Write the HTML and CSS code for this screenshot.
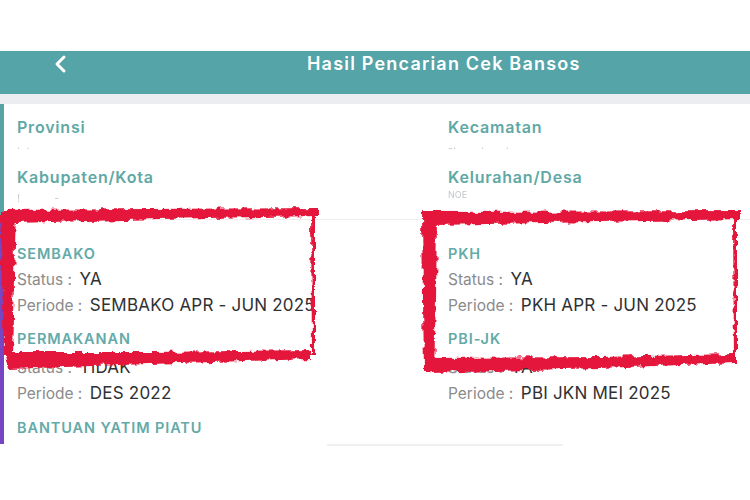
FILE: index.html
```html
<!DOCTYPE html>
<html>
<head>
<meta charset="utf-8">
<link rel="stylesheet" href="styles.css">
</head>
<body>
<div class="page">
  <div class="topspace"></div>
  <header class="appbar">
    <svg class="back" width="16" height="20" viewBox="0 0 16 20"><polyline points="11,3 4,10 11,17" fill="none" stroke="#fff" stroke-width="3" stroke-linecap="round" stroke-linejoin="round"/></svg>
    <div class="title">Hasil Pencarian Cek Bansos</div>
  </header>
  <div class="strip"></div>
  <div class="card">
    <section class="sec sec-loc">
      <div class="col">
        <div class="label">Provinsi</div>
        <div class="blur">·  ·</div>
        <div class="label l2">Kabupaten/Kota</div>
        <div class="blur">!           -</div>
      </div>
      <div class="col">
        <div class="label">Kecamatan</div>
        <div class="blur">-·        ·       ·</div>
        <div class="label l2">Kelurahan/Desa</div>
        <div class="blur faint">NOE</div>
      </div>
    </section>
    <div class="divider"></div>
    <section class="sec sec-prog">
      <div class="col">
        <div class="head">SEMBAKO</div>
        <div class="row"><span class="k">Status :</span> <span class="v">YA</span></div>
        <div class="row"><span class="k">Periode :</span> <span class="v">SEMBAKO APR - JUN 2025</span></div>
        <div class="head h2">PERMAKANAN</div>
        <div class="row r2"><span class="k">Status :</span> <span class="v">TIDAK</span></div>
        <div class="row"><span class="k">Periode :</span> <span class="v">DES 2022</span></div>
        <div class="head h3">BANTUAN YATIM PIATU</div>
      </div>
      <div class="col">
        <div class="head">PKH</div>
        <div class="row"><span class="k">Status :</span> <span class="v">YA</span></div>
        <div class="row"><span class="k">Periode :</span> <span class="v">PKH APR - JUN 2025</span></div>
        <div class="head h2">PBI-JK</div>
        <div class="row r2"><span class="k">Status :</span> <span class="v">YA</span></div>
        <div class="row"><span class="k">Periode :</span> <span class="v">PBI JKN MEI 2025</span></div>
      </div>
    </section>
  </div>
  <div class="bottomline"></div>
  <svg class="marks" width="750" height="500" viewBox="0 0 750 500">
    <defs>
      <filter id="rough" x="-5%" y="-5%" width="110%" height="110%">
        <feTurbulence type="fractalNoise" baseFrequency="0.12" numOctaves="3" seed="7" result="n"/>
        <feDisplacementMap in="SourceGraphic" in2="n" scale="7" xChannelSelector="R" yChannelSelector="G"/>
      </filter>
    </defs>
    <g fill="#e5173b" filter="url(#rough)">
      <!-- left box -->
      <polygon points="0,210 318,208 318,216 160,219 16,223 0,224"/>
      <polygon points="0,210 16,212 14,280 12,355 4,356 2,280"/>
      <polygon points="4,352 150,352 311,350 311,359 150,364 8,369"/>
      <polygon points="311,210 315,210 315,355 312,355"/>
      <!-- right box -->
      <polygon points="423,212 740,211 740,219 600,222 436,225 423,226"/>
      <polygon points="422,212 437,214 436,300 434,371 424,371 423,300"/>
      <polygon points="425,358 600,357 735,354 736,363 600,368 430,373"/>
      <polygon points="733,211 737,211 737,364 734,364"/>
    </g>
  </svg>
</div>
</body>
</html>
```
FILE: styles.css
```css
* { box-sizing: border-box; }
html, body { margin: 0; padding: 0; background: #fff; }
body { font-family: Inter, "Noto Sans", sans-serif; width: 750px; height: 500px; overflow: hidden; }
.page { position: relative; width: 750px; height: 500px; }
.topspace { height: 51px; }
.appbar {
  height: 43px;
  background: #54a4a8;
  display: flex;
  align-items: center;
  position: relative;
}
.back { margin-left: 53px; margin-top: -18px; }
.title {
  position: absolute;
  left: 307px;
  top: 0;
  height: 26px;
  line-height: 26px;
  color: #fff;
  font-weight: 600;
  font-size: 18px;
  letter-spacing: 1.2px;
}
.strip { height: 10px; background: #ebedf1; }
.card { background: #fff; }
.sec {
  display: grid;
  grid-template-columns: 431px 1fr;
  padding-left: 17px;
}
.sec-loc { border-left: 4px solid #56a3a3; padding-left: 13px; padding-top: 12px; padding-bottom: 11px; height: 115px; }
.sec-prog { border-left: 4px solid #7646c3; padding-left: 13px; padding-top: 23px; height: 224px; }
.label {
  color: #5fa8a6;
  font-weight: 600;
  font-size: 16px;
  line-height: 22px;
  height: 22px;
  letter-spacing: 0.8px;
}
.l2 { margin-top: 8px; }
.blur {
  color: #c9cccf;
  font-size: 11px;
  line-height: 20px;
  height: 20px;
  white-space: pre;
  filter: blur(0.6px);
}
.faint { font-size: 9px; color: #c3c6c9; line-height: 14px; }
.divider { height: 1px; background: #eeeeee; margin-left: 4px; }
.head {
  color: #63aaa8;
  font-weight: 600;
  font-size: 14.5px;
  line-height: 22px;
  height: 22px;
  letter-spacing: 0.9px;
}
.h2 { margin-top: 11px; }
.h3 { margin-top: 12px; }
.row {
  height: 26px;
  line-height: 28px;
  white-space: nowrap;
}
.r2 { margin-top: 3px; }
.k { color: #8b8b8b; font-size: 15.5px; margin-right: 3px; }
.v { color: #2f3133; font-size: 17px; letter-spacing: 0.2px; }
.bottomline { height: 2px; width: 236px; margin-left: 327px; background: #eef0f2; }
.marks { position: absolute; left: 0; top: 0; pointer-events: none; }
```
